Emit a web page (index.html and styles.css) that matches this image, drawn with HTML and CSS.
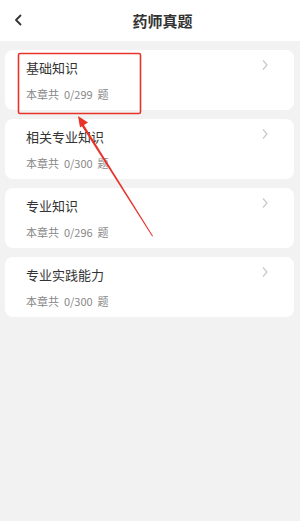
FILE: index.html
```html
<!DOCTYPE html>
<html lang="zh-CN">
<head>
    <meta charset="UTF-8">
    <meta name="viewport" content="width=device-width, initial-scale=1.0">
    <title>药师真题</title>
    <link rel="stylesheet" href="styles.css">
</head>
<body>
<div class="page">
    <!-- Top bar -->
    <div class="topbar">
        <span class="back">
            <svg width="12" height="14" viewBox="0 0 12 14"><path d="M8.5 2.5 L4 7 L8.5 11.5" fill="none" stroke="#333" stroke-width="1.8" stroke-linecap="round" stroke-linejoin="round"/></svg>
        </span>
        <h1>药师真题</h1>
    </div>

    <!-- Chapter list -->
    <div class="list">
        <div class="card">
            <div class="info">
                <p class="name">基础知识</p>
                <p class="count">本章共&nbsp;&nbsp;0/299&nbsp;&nbsp;题</p>
            </div>
            <span class="arrow"><svg width="8" height="12" viewBox="0 0 8 12"><path d="M2 1.5 L6 6 L2 10.5" fill="none" stroke="#c8c8c8" stroke-width="1.2"/></svg></span>
        </div>
        <div class="card">
            <div class="info">
                <p class="name">相关专业知识</p>
                <p class="count">本章共&nbsp;&nbsp;0/300&nbsp;&nbsp;题</p>
            </div>
            <span class="arrow"><svg width="8" height="12" viewBox="0 0 8 12"><path d="M2 1.5 L6 6 L2 10.5" fill="none" stroke="#c8c8c8" stroke-width="1.2"/></svg></span>
        </div>
        <div class="card">
            <div class="info">
                <p class="name">专业知识</p>
                <p class="count">本章共&nbsp;&nbsp;0/296&nbsp;&nbsp;题</p>
            </div>
            <span class="arrow"><svg width="8" height="12" viewBox="0 0 8 12"><path d="M2 1.5 L6 6 L2 10.5" fill="none" stroke="#c8c8c8" stroke-width="1.2"/></svg></span>
        </div>
        <div class="card">
            <div class="info">
                <p class="name">专业实践能力</p>
                <p class="count">本章共&nbsp;&nbsp;0/300&nbsp;&nbsp;题</p>
            </div>
            <span class="arrow"><svg width="8" height="12" viewBox="0 0 8 12"><path d="M2 1.5 L6 6 L2 10.5" fill="none" stroke="#c8c8c8" stroke-width="1.2"/></svg></span>
        </div>
    </div>

    <!-- Red annotation over the first card -->
    <svg class="mark" width="300" height="521" viewBox="0 0 300 521">
        <rect x="18.5" y="53.5" width="122" height="60" rx="1.5" fill="none" stroke="#e8332a" stroke-width="1.6"/>
        <polygon points="153,236 81.5,121 79.5,122.5 152.2,236.5" fill="#e8332a"/>
        <polygon points="78,116 88,122.5 80,127.5" fill="#e8332a"/>
    </svg>
</div>
</body>
</html>
```

FILE: styles.css
```css
/* General reset */
* {
    margin: 0;
    padding: 0;
    box-sizing: border-box;
}

body {
    font-family: "Noto Sans CJK SC", "Noto Sans", sans-serif;
    background: #f2f2f2;
    color: #333;
}

.page {
    position: relative;
    width: 300px;
    height: 521px;
    overflow: hidden;
}

/* Top bar */
.topbar {
    height: 41px;
    background: #fff;
    display: flex;
    align-items: center;
    justify-content: center;
    padding-left: 25px;
    position: relative;
}

.topbar h1 {
    font-size: 15px;
    font-weight: 700;
    color: #333;
    margin-top: -1px;
}

.back {
    position: absolute;
    left: 12px;
    top: 13px;
    display: flex;
}

/* List */
.list {
    display: flex;
    flex-direction: column;
    gap: 9px;
    padding: 9px 6px 0 5px;
}

.card {
    height: 60px;
    background: #fff;
    border-radius: 8px;
    display: flex;
    justify-content: space-between;
    padding: 0 25px 0 21px;
}

.info {
    display: flex;
    flex-direction: column;
}

.name {
    font-size: 13px;
    line-height: 18px;
    margin-top: 9px;
    color: #333;
}

.count {
    font-size: 11px;
    line-height: 14px;
    margin-top: 10px;
    color: #888;
}

.arrow {
    margin-top: 9px;
    display: flex;
}

/* Annotation */
.mark {
    position: absolute;
    left: 0;
    top: 0;
    pointer-events: none;
}
```
